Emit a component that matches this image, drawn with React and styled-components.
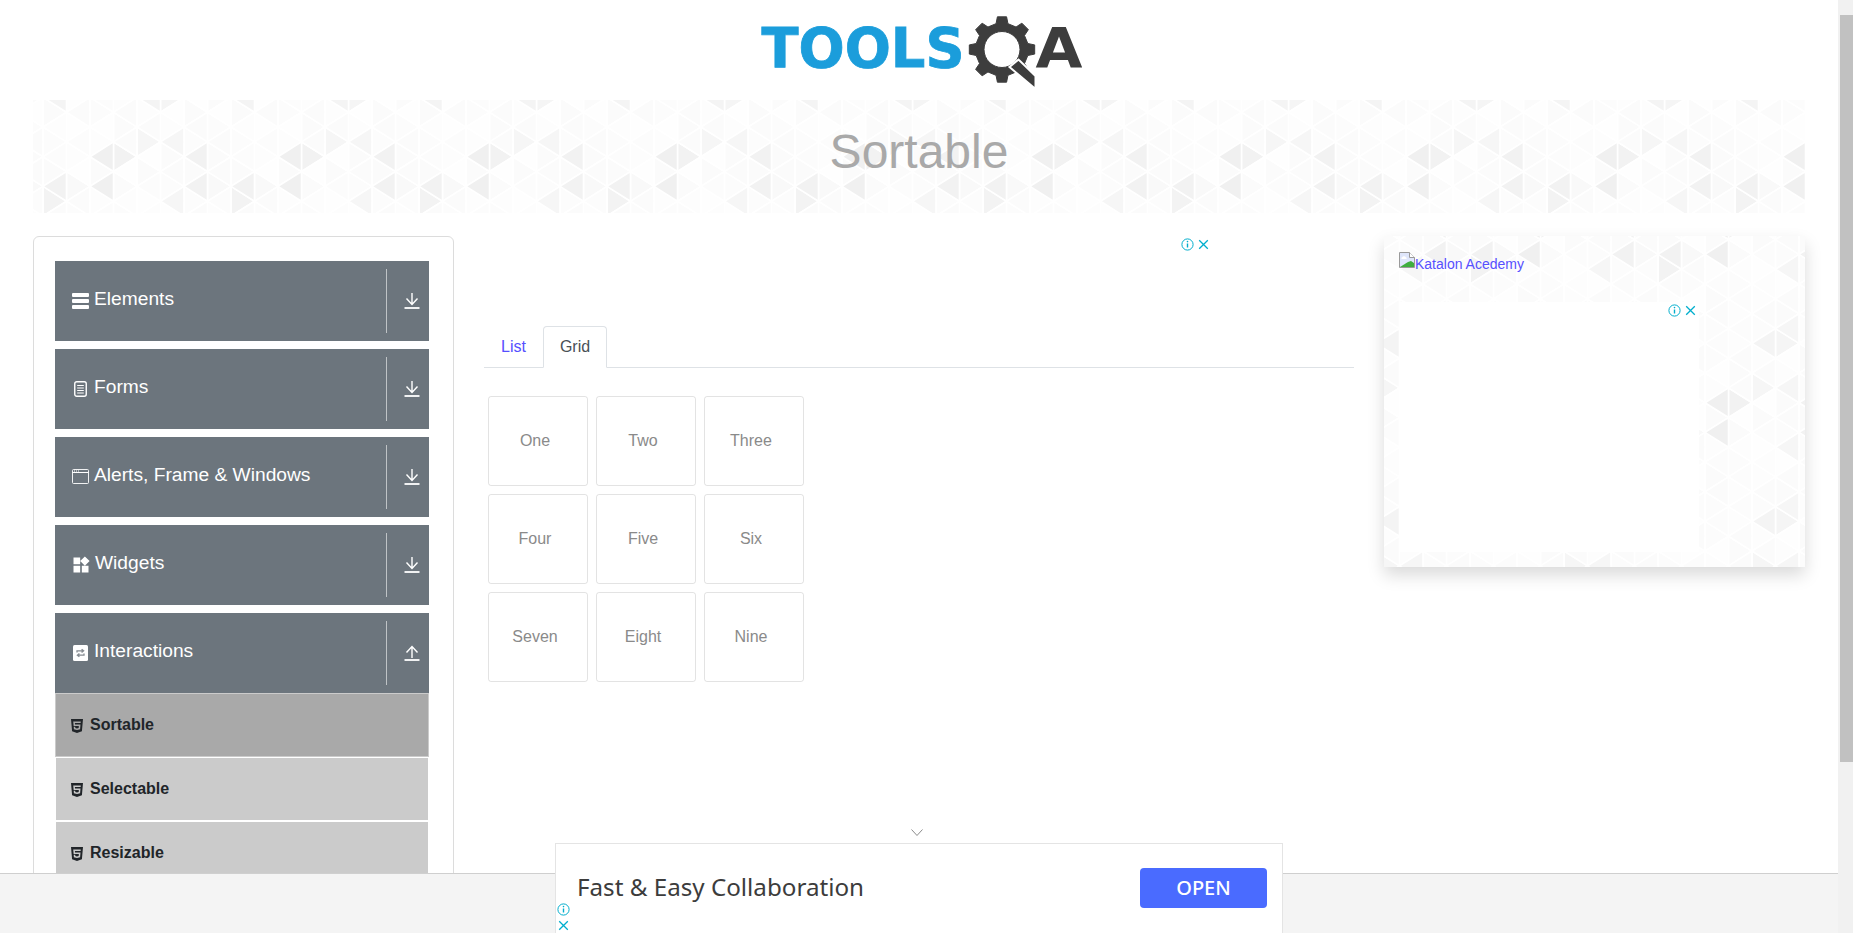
import React from 'react'
import styled, { createGlobalStyle } from 'styled-components'
import { FaHtml5 } from 'react-icons/fa'
import { MdWidgets } from 'react-icons/md'

// triangle wallpaper, one tile is 8 columns by 6 rows
const COL = 23.5
const SIDE = 178 / 6
const SHADES = ['#fefefe', '#fcfcfc', '#fbfbfb', '#fdfdfd', '#fbfbfb', '#fdfdfd', '#fcfcfc', '#fefefe', '#fbfbfb']
const MARKED = {
  'L3:1': '#f0f0f0', 'R3:1': '#f2f2f2', 'L1:2': '#f2f2f2', 'L3:2': '#f0f0f0',
  'R0:3': '#f3f3f3', 'R4:1': '#f6f6f6', 'L6:1': '#f6f6f6', 'L7:1': '#f2f2f2',
  'L7:2': '#f2f2f2', 'L6:3': '#f6f6f6', 'L1:5': '#f4f4f4', 'L5:5': '#f4f4f4',
  'R5:5': '#f5f5f5', 'L6:5': '#f6f6f6', 'R1:2': '#f9f9f9', 'R7:2': '#f9f9f9',
}

const buildTexture = () => {
  let shapes = ''
  for (let col = 0; col <= 8; col++) {
    const x = col * COL
    const base = col % 2 === 0 ? -2.6 : 12.2
    for (let k = -1; k <= 6; k++) {
      const top = base + k * SIDE
      const wrapK = (k + 6) % 6
      const wrapCol = col % 8
      const sides = [['R', COL], ['L', -COL]]
      sides.forEach(([side, dx]) => {
        const hash = (wrapCol * wrapCol * 5 + wrapK * 11 + wrapCol * wrapK * 3 + (side === 'R' ? 4 : 0)) % SHADES.length
        const fill = MARKED[`${side}${wrapCol}:${wrapK}`] || SHADES[hash]
        shapes += `<polygon points='${x},${top} ${x},${top + SIDE} ${x + dx},${top + SIDE / 2}' fill='${fill}' stroke='#fff' stroke-width='1.6'/>`
      })
    }
  }
  const svg = `<svg xmlns='http://www.w3.org/2000/svg' width='188' height='178'><defs><filter id='s' x='0' y='0' width='100%' height='100%'><feGaussianBlur stdDeviation='0.7'/></filter></defs><rect width='188' height='178' fill='#fff'/><g filter='url(#s)'>${shapes}</g></svg>`
  return `data:image/svg+xml,${encodeURIComponent(svg)}`
}

const TEXTURE = buildTexture()

const gearPath = (cx, cy, outer, root, hole, teeth) => {
  const point = (r, deg) => {
    const a = (deg * Math.PI) / 180
    return `${(cx + r * Math.cos(a)).toFixed(2)} ${(cy + r * Math.sin(a)).toFixed(2)}`
  }
  let d = ''
  for (let i = 0; i < teeth; i++) {
    const a = -90 + (i * 360) / teeth
    d += `${i === 0 ? 'M' : 'L'}${point(root, a - 13)} L${point(outer, a - 8)} L${point(outer, a + 8)} L${point(root, a + 13)} `
  }
  d += `Z M${cx - hole} ${cy} a${hole} ${hole} 0 1 0 ${hole * 2} 0 a${hole} ${hole} 0 1 0 ${-hole * 2} 0 Z`
  return d
}

const GlobalStyle = createGlobalStyle`
  html, body {
    margin: 0;
    height: 100%;
    overflow: hidden;
    background: #fff;
    font-family: "Liberation Sans", Arial, sans-serif;
    font-size: 16px;
  }
`

const Page = styled.div`
  margin-right: 15px;
  height: 933px;
  overflow: hidden;
`

const Header = styled.header`
  height: 100px;
  display: flex;
  justify-content: center;
  align-items: flex-start;
  padding-top: 10px;
  box-sizing: border-box;
`

const Banner = styled.div`
  height: 113px;
  margin: 0 33px 23px;
  padding-bottom: 11px;
  box-sizing: border-box;
  display: flex;
  align-items: center;
  justify-content: center;
  background: url("${TEXTURE}") 9.5px 0;

  h1 {
    margin: 0;
    font-size: 48px;
    font-weight: 400;
    color: #a9a9a9;
  }
`

const Layout = styled.div`
  display: flex;
  align-items: flex-start;
  padding: 0 33px;
`

const Sidebar = styled.aside`
  flex: 0 0 421px;
  box-sizing: border-box;
  border: 1px solid #dcdcdc;
  border-radius: 6px;
  padding: 24px 24px 24px 21px;
`

const Group = styled.div`
  margin-bottom: ${(p) => (p.$open ? '0' : '8px')};
`

const GroupHeader = styled.div`
  height: 80px;
  display: flex;
  align-items: center;
  padding: 0 9px 0 16px;
  background: #6c757d;
  color: #fff;
`

const GroupTitle = styled.div`
  flex: 1;
  display: flex;
  align-items: center;
  font-size: 19.2px;
  padding-bottom: 4px;

  svg {
    display: block;
  }
`

const IconBox = styled.span`
  flex: 0 0 19px;
  height: 18px;
  margin-right: 4px;
  margin-top: 3px;
  display: flex;
  align-items: center;
  justify-content: center;
`

const Divider = styled.span`
  width: 1px;
  height: 64px;
  background: #bfc3c6;
  margin-right: 17px;
`

const Item = styled.div`
  height: 64px;
  box-sizing: border-box;
  border: 1px solid ${(p) => (p.$active ? '#cbcbcb' : '#fff')};
  background: ${(p) => (p.$active ? '#a9a9a9' : '#cbcbcb')};
  display: flex;
  align-items: center;
  padding: 0 0 0 13px;
  font-weight: 700;
  color: #212529;

  svg {
    margin-right: 5px;
    margin-top: 1px;
  }
`

const Main = styled.main`
  flex: 1;
  min-width: 0;
  margin: 0 30px;
`

const AdSlot = styled.div`
  position: relative;
  width: 728px;
  height: 90px;
`

const AdMarks = styled.div`
  position: absolute;
  display: flex;
  flex-direction: ${(p) => (p.$stacked ? 'column' : 'row')};
  gap: 1px;
  color: #00aecd;
  ${(p) => (p.$stacked ? 'left: 0; bottom: 0;' : 'top: 1px; right: 1px;')}

  svg {
    display: block;
  }
`

const Tabs = styled.nav`
  display: flex;
  border-bottom: 1px solid #dee2e6;
  height: 42px;
  box-sizing: border-box;
`

const Tab = styled.div`
  box-sizing: border-box;
  height: 42px;
  padding: 8px 16px;
  line-height: 24px;
  border: 1px solid ${(p) => (p.$active ? '#dee2e6' : 'transparent')};
  border-bottom-color: ${(p) => (p.$active ? '#fff' : 'transparent')};
  border-radius: 4px 4px 0 0;
  background: ${(p) => (p.$active ? '#fff' : 'transparent')};
  color: ${(p) => (p.$active ? '#495057' : '#5650ff')};
`

const CellGrid = styled.div`
  display: grid;
  grid-template-columns: repeat(3, 100px);
  grid-auto-rows: 90px;
  gap: 8px;
  margin: 28px 0 0 4px;
`

const Cell = styled.div`
  box-sizing: border-box;
  border: 1px solid rgba(0, 0, 0, 0.11);
  border-radius: 3px;
  display: flex;
  align-items: center;
  justify-content: center;
  padding: 0 6px 0 0;
  color: #8a8a8a;
`

const SidePanel = styled.aside`
  flex: 0 0 421px;
  height: 331px;
  box-sizing: border-box;
  padding: 15px;
  background: url("${TEXTURE}") 85.5px 110.3px;
  box-shadow: 0 8px 16px rgba(0, 0, 0, 0.15);
`

const PromoLink = styled.a`
  display: flex;
  align-items: flex-start;
  height: 51px;
  font-size: 14px;
  line-height: 27px;
  color: #5650ff;
  text-decoration: none;

  svg {
    margin-top: 1px;
    flex: none;
  }
`

const SideAd = styled.div`
  position: relative;
  width: 300px;
  height: 250px;
  background: #fff;
`

const Footer = styled.footer`
  position: fixed;
  left: 0;
  right: 15px;
  bottom: 0;
  height: 60px;
  box-sizing: border-box;
  background: #f4f4f4;
  border-top: 1px solid #cfcfcf;
`

const AnchorAd = styled.div`
  position: absolute;
  left: 555px;
  bottom: 0;
  width: 728px;
  height: 90px;
  box-sizing: border-box;
  background: #fff;
  border: 1px solid #e4e4e4;
  border-bottom: none;
  display: flex;
  align-items: center;
  justify-content: space-between;
  padding: 0 15px 2px 21px;
`

const AdHeadline = styled.span`
  font-family: "Noto Sans", "Open Sans", sans-serif;
  font-size: 24.2px;
  color: #3c3c3c;
  margin-bottom: 3px;
`

const AdButton = styled.span`
  width: 127px;
  height: 40px;
  border-radius: 4px;
  background: #4a6bff;
  color: #fff;
  font-family: "Noto Sans", "Open Sans", sans-serif;
  font-size: 20px;
  font-weight: 500;
  display: flex;
  align-items: center;
  justify-content: center;
`

const Collapse = styled.svg`
  position: absolute;
  left: 354px;
  top: -16px;
`

const ScrollTrack = styled.div`
  position: fixed;
  top: 0;
  right: 0;
  bottom: 0;
  width: 15px;
  background: #f1f1f1;
`

const ScrollThumb = styled.div`
  position: absolute;
  top: 15px;
  left: 2px;
  right: 0;
  height: 747px;
  background: #c1c1c1;
`

const LogoImage = () => (
  <svg width="335" height="85" viewBox="751.5 10 335 85" role="img" aria-label="Tools QA">
    <text
      x="761"
      y="67"
      textLength="203"
      lengthAdjust="spacingAndGlyphs"
      fontFamily="DejaVu Sans, sans-serif"
      fontWeight="700"
      fontSize="55"
      fill="#1b9ddb"
      stroke="#1b9ddb"
      strokeWidth="0.8"
    >
      TOOLS
    </text>
    <path
      d={gearPath(1001.5, 49.5, 33, 26.5, 18, 8)}
      fill="#3d3d3d"
      fillRule="evenodd"
      stroke="#3d3d3d"
      strokeWidth="1"
      strokeLinejoin="round"
    />
    <path d="M1009 67 L1018 59.5 L1035 76 L1035 89 Z" fill="#3d3d3d" stroke="#fff" strokeWidth="2" />
    <text
      x="1035"
      y="67"
      textLength="47"
      lengthAdjust="spacingAndGlyphs"
      fontFamily="DejaVu Sans, sans-serif"
      fontWeight="700"
      fontSize="55"
      fill="#3d3d3d"
    >
      A
    </text>
  </svg>
)

const BarsIcon = () => (
  <svg width="17" height="16" viewBox="0 0 17 16" fill="#fff">
    <rect y="0" width="17" height="4" rx="1" />
    <rect y="6" width="17" height="4" rx="1" />
    <rect y="12" width="17" height="4" rx="1" />
  </svg>
)

const FormIcon = () => (
  <svg width="13" height="16" viewBox="0 0 13 16" fill="none" stroke="#fff">
    <rect x="0.75" y="0.75" width="11.5" height="14.5" rx="2" strokeWidth="1.4" />
    <path d="M3.2 4.5h6.6M3.2 7h6.6M3.2 9.5h6.6M3.2 12h6.6" strokeWidth="1" />
  </svg>
)

const WindowIcon = () => (
  <svg width="17" height="15" viewBox="0 0 17 15" fill="none" stroke="#fff">
    <rect x="0.5" y="0.5" width="16" height="14" rx="1" strokeWidth="1" opacity="0.9" />
    <path d="M0.5 3.5h16" strokeWidth="1" />
    <path d="M2 2h1M4 2h1M6 2h1" strokeWidth="1" />
  </svg>
)

const SyncIcon = () => (
  <svg width="15" height="16" viewBox="0 0 15 16">
    <rect width="15" height="16" rx="1.5" fill="#fff" />
    <path
      d="M4 7.5V5.8h6M8.6 4.2 10.6 5.8 8.6 7.4M11 8.5v1.7H5M6.4 8.6 4.4 10.2 6.4 11.8"
      fill="none"
      stroke="#858b91"
      strokeWidth="1.3"
    />
  </svg>
)

const TransferIcon = ({ up }) => (
  <svg width="16" height="16" viewBox="0 0 16 16" fill="none" stroke="#fff" strokeWidth="1.4">
    <path d="M0.5 15h15" strokeWidth="1.8" />
    {up ? (
      <path d="M8 13V1.5M2.5 7.5 8 1.5l5.5 6" />
    ) : (
      <path d="M8 0v11.5M2.5 5.5 8 11.5l5.5-6" />
    )}
  </svg>
)

const InfoMark = () => (
  <svg width="15" height="15" viewBox="0 0 15 15" fill="none" stroke="currentColor">
    <circle cx="7.5" cy="7.5" r="5.6" strokeWidth="1" />
    <path d="M7.5 6.5v4" strokeWidth="1.4" />
    <circle cx="7.5" cy="4.6" r="0.8" fill="currentColor" stroke="none" />
  </svg>
)

const CloseMark = () => (
  <svg width="15" height="15" viewBox="0 0 15 15" fill="none" stroke="currentColor" strokeWidth="1.3">
    <path d="M3.2 3.2l8.6 8.6M11.8 3.2l-8.6 8.6" />
  </svg>
)

const BrokenImage = () => (
  <svg width="16" height="16" viewBox="0 0 16 16">
    <path d="M0.5 0.5h10l5 5v10h-15z" fill="#dfe6fb" stroke="#9a9a9a" />
    <path d="M10.5 0.5v5h5" fill="#fff" stroke="#9a9a9a" />
    <path d="M1 15l8-5 3-1 3 2v4z" fill="#3fae3f" />
    <path d="M3 5.5c1-1.6 3-1.6 4 0 1 .2 1 1.5 0 1.5H3c-1 0-1-1.3 0-1.5z" fill="#fff" />
  </svg>
)

const groups = [
  { name: 'Elements', icon: <BarsIcon /> },
  { name: 'Forms', icon: <FormIcon /> },
  { name: 'Alerts, Frame & Windows', icon: <WindowIcon /> },
  { name: 'Widgets', icon: <MdWidgets size={20} /> },
  { name: 'Interactions', icon: <SyncIcon />, open: true },
]

const subItems = ['Sortable', 'Selectable', 'Resizable']
const cells = ['One', 'Two', 'Three', 'Four', 'Five', 'Six', 'Seven', 'Eight', 'Nine']

const App = () => {
  return (
    <Page>
      <GlobalStyle />
      <Header>
        <LogoImage />
      </Header>
      <Banner>
        <h1>Sortable</h1>
      </Banner>
      <Layout>
        <Sidebar>
          {groups.map((group) => (
            <Group key={group.name} $open={group.open}>
              <GroupHeader>
                <GroupTitle>
                  <IconBox>{group.icon}</IconBox>
                  {group.name}
                </GroupTitle>
                <Divider />
                <TransferIcon up={group.open} />
              </GroupHeader>
              {group.open &&
                subItems.map((item) => (
                  <Item key={item} $active={item === 'Sortable'}>
                    <FaHtml5 size={16} />
                    {item}
                  </Item>
                ))}
            </Group>
          ))}
        </Sidebar>
        <Main>
          <AdSlot>
            <AdMarks>
              <InfoMark />
              <CloseMark />
            </AdMarks>
          </AdSlot>
          <Tabs>
            <Tab>List</Tab>
            <Tab $active>Grid</Tab>
          </Tabs>
          <CellGrid>
            {cells.map((cell) => (
              <Cell key={cell}>{cell}</Cell>
            ))}
          </CellGrid>
        </Main>
        <SidePanel>
          <PromoLink href="#">
            <BrokenImage />
            Katalon Acedemy
          </PromoLink>
          <SideAd>
            <AdMarks>
              <InfoMark />
              <CloseMark />
            </AdMarks>
          </SideAd>
        </SidePanel>
      </Layout>
      <Footer>
        <AnchorAd>
          <Collapse width="14" height="10" viewBox="0 0 14 10" fill="none" stroke="#8a8a8a">
            <path d="M1.5 1.5 7 7.5l5.5-6" />
          </Collapse>
          <AdHeadline>Fast &amp; Easy Collaboration</AdHeadline>
          <AdButton>OPEN</AdButton>
          <AdMarks $stacked>
            <InfoMark />
            <CloseMark />
          </AdMarks>
        </AnchorAd>
      </Footer>
      <ScrollTrack>
        <ScrollThumb />
      </ScrollTrack>
    </Page>
  )
}

export default App
